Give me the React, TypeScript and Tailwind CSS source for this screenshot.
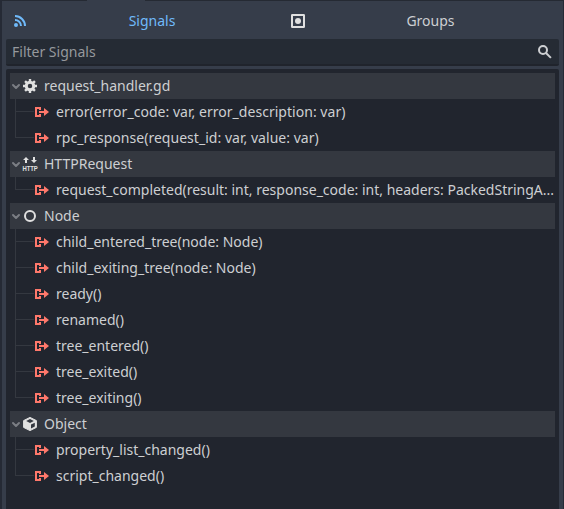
import React from 'react';

type IconName = 'gear' | 'http' | 'node' | 'object';

interface Group {
  name: string;
  icon: IconName;
  signals: string[];
}

const groups: Group[] = [
  {
    name: 'request_handler.gd',
    icon: 'gear',
    signals: ['error(error_code: var, error_description: var)', 'rpc_response(request_id: var, value: var)'],
  },
  {
    name: 'HTTPRequest',
    icon: 'http',
    signals: ['request_completed(result: int, response_code: int, headers: PackedStringA...'],
  },
  {
    name: 'Node',
    icon: 'node',
    signals: [
      'child_entered_tree(node: Node)',
      'child_exiting_tree(node: Node)',
      'ready()',
      'renamed()',
      'tree_entered()',
      'tree_exited()',
      'tree_exiting()',
    ],
  },
  { name: 'Object', icon: 'object', signals: ['property_list_changed()', 'script_changed()'] },
];

const teeth = [0, 45, 90, 135];

function GroupIcon({ name }: { name: IconName }) {
  return (
    <svg className="size-4 shrink-0 overflow-visible" viewBox="0 0 16 16" fill="none">
      {name === 'gear' && (
        <>
          <circle cx="8" cy="8" r="3.75" stroke="#e0e0e0" strokeWidth="3" />
          {teeth.map((a) => (
            <path key={a} d="M8 1v3M8 12v3" stroke="#e0e0e0" strokeWidth="2.4" transform={`rotate(${a} 8 8)`} />
          ))}
        </>
      )}
      {name === 'http' && (
        <>
          <path d="M4 1 1 4h2v3h2V4h2zM11 1v3H9l3 3 3-3h-2V1z" fill="#e0e0e0" />
          <text
            x="0.4"
            y="15"
            fill="#e0e0e0"
            fontSize="7"
            fontWeight="700"
            textLength="15.4"
            lengthAdjust="spacingAndGlyphs"
            fontFamily="Liberation Sans, sans-serif"
          >
            HTTP
          </text>
        </>
      )}
      {name === 'node' && <circle cx="8" cy="8" r="5" stroke="#e0e0e0" strokeWidth="2" />}
      {name === 'object' && (
        <>
          <path
            d="M8 1.4 1.6 4.6v6.8L8 14.6l6.4-3.2V4.6z"
            fill="#e0e0e0"
            stroke="#e0e0e0"
            strokeWidth="1"
            strokeLinejoin="round"
          />
          <path d="m8 3.1 3.8 1.9L8 6.9 4.2 5zM9 8.6l3.8-1.9v3.8L9 12.4z" fill="#343840" />
        </>
      )}
    </svg>
  );
}

function SignalIcon() {
  return (
    <svg className="size-4 shrink-0" viewBox="0 0 16 16" fill="#ff786b">
      <path d="M1 3h6v3H5V5H3v6h2v-1h2v3H1z" />
      <path d="M5 7h5V4l5 4-5 4V9H5z" />
    </svg>
  );
}

function GroupRows({ group }: { group: Group }) {
  return (
    <section>
      <div className="flex h-[26px] items-center bg-[#343840]">
        <svg className="size-3 shrink-0" viewBox="0 0 12 12" fill="none">
          <path d="m3 5 3 3 3-3" stroke="#7b7e84" strokeWidth="2" strokeLinecap="round" strokeLinejoin="round" />
        </svg>
        <GroupIcon name={group.icon} />
        <span className="ml-1.5">{group.name}</span>
      </div>
      {group.signals.map((signal, i) => (
        <div key={signal} className="flex h-[26px] items-center">
          <div className="flex h-full w-6 shrink-0 flex-col pl-[5px]">
            <div className="h-[13px] border-b border-l border-[#343840]" />
            <div className={i < group.signals.length - 1 ? 'h-[13px] border-l border-[#343840]' : 'h-[13px]'} />
          </div>
          <SignalIcon />
          <span className={group.icon === 'gear' ? 'ml-1.5 tracking-[0.032px]' : 'ml-1.5'}>{signal}</span>
        </div>
      ))}
    </section>
  );
}

export default function App() {
  return (
    <div className="flex h-[509px] w-[564px] flex-col overflow-hidden border-r border-l-2 border-r-[#252a35] border-l-[#252a35] bg-[#363d4a] font-['Noto_Sans',sans-serif] text-[14px] leading-[26px] whitespace-nowrap text-[#cdcfd2]">
      <div className="flex h-px shrink-0 justify-between bg-[#252a33]">
        <div className="ml-[85px] w-[58px] bg-[#363d4a]" />
      </div>
      <nav className="flex h-[38px] shrink-0 pt-px pl-[4px]">
        <div className="flex w-[278px] items-center pl-1.5">
          <svg className="size-4 shrink-0" viewBox="0 0 16 16" fill="none" stroke="#70bafa" strokeWidth="2">
            <circle cx="4" cy="12" r="2" fill="#70bafa" stroke="none" />
            <path d="M3 7a6 6 0 0 1 6 6M3 3a10 10 0 0 1 10 10" />
          </svg>
          <span className="flex-1 pr-2 text-center text-[#70bafa]">Signals</span>
        </div>
        <div className="flex w-[275px] items-center pl-1.5">
          <svg className="size-4 shrink-0" viewBox="0 0 16 16" fill="none">
            <rect x="2" y="2" width="12" height="12" rx=".3" stroke="#e0e0e0" strokeWidth="2" />
            <circle cx="8" cy="8" r="3" fill="#e0e0e0" />
          </svg>
          <span className="flex-1 pr-1 text-center">Groups</span>
        </div>
      </nav>
      <div className="mx-1 flex h-[27px] shrink-0 items-center justify-between rounded-[2px] border-b-2 border-[#20242c] bg-[#252b34] pr-1.5 pl-1.5">
        <span className="text-[#96999d]">Filter Signals</span>
        <svg className="size-4" viewBox="0 0 16 16" fill="none" stroke="#cdcfd2" strokeWidth="2">
          <circle cx="6" cy="6" r="4" />
          <path d="m9 9 4.9 4.9" />
        </svg>
      </div>
      <main className="mx-1 mt-[3px] h-[440px] shrink-0 rounded-t-[2px] bg-[#21252e] px-1 pt-1">
        {groups.map((group) => (
          <GroupRows key={group.name} group={group} />
        ))}
      </main>
    </div>
  );
}
